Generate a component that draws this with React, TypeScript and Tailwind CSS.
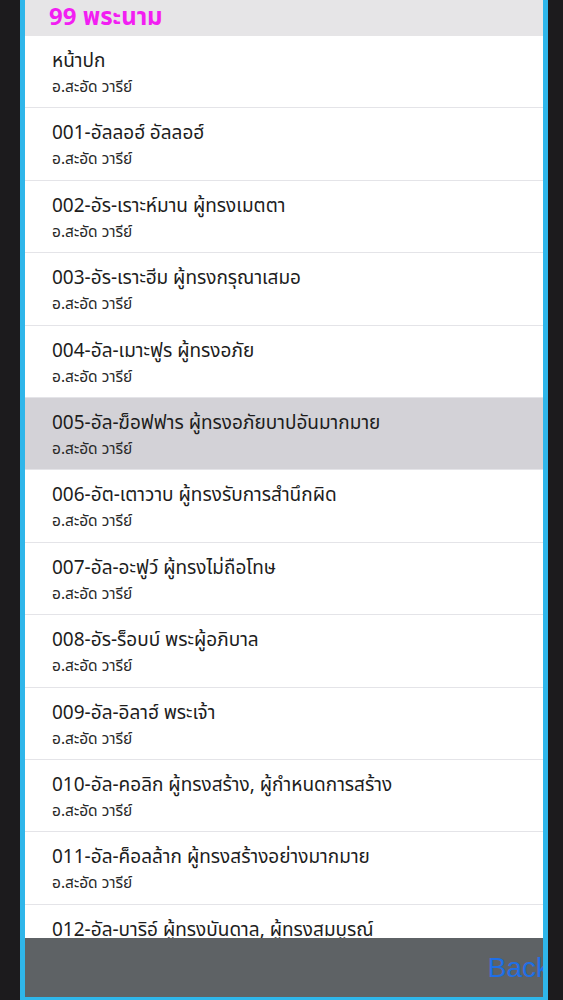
import React from "react";

const items = [
  "หน้าปก",
  "001-อัลลอฮ์ อัลลอฮ์",
  "002-อัร-เราะห์มาน ผู้ทรงเมตตา",
  "003-อัร-เราะฮีม ผู้ทรงกรุณาเสมอ",
  "004-อัล-เมาะฟูร ผู้ทรงอภัย",
  "005-อัล-ฆ็อฟฟาร ผู้ทรงอภัยบาปอันมากมาย",
  "006-อัต-เตาวาบ ผู้ทรงรับการสำนึกผิด",
  "007-อัล-อะฟูว์ ผู้ทรงไม่ถือโทษ",
  "008-อัร-ร็อบบ์ พระผู้อภิบาล",
  "009-อัล-อิลาฮ์ พระเจ้า",
  "010-อัล-คอลิก ผู้ทรงสร้าง, ผู้กำหนดการสร้าง",
  "011-อัล-ค็อลล้าก ผู้ทรงสร้างอย่างมากมาย",
  "012-อัล-บาริอ์ ผู้ทรงบันดาล, ผู้ทรงสมบูรณ์",
];

export default function App() {
  return (
    <div
      className="w-[563px] h-[1000px] bg-[#1c1b1d] flex overflow-hidden"
      style={{ fontFamily: '"Noto Sans", "Noto Sans Thai", "Liberation Sans", sans-serif' }}
    >
      <div className="ml-[20px] w-[528px] h-[1000px] border-x-[5px] border-b-[3px] border-[#2fb6ea] flex flex-col overflow-hidden">
        <div className="h-[36px] shrink-0 bg-[#e6e5e7] pl-[24px] flex items-start">
          <span className="text-[24px] font-bold text-[#f21ef2] leading-[32px]">99 พระนาม</span>
        </div>
        <div className="flex-1 overflow-hidden bg-white">
          {items.map((t, i) => (
            <div
              key={i}
              className={`h-[72.4px] border-b border-[#e4e4e8] ${i === 5 ? "bg-[#d3d2d7]" : "bg-white"}`}
            >
              <div className="pl-[27px] pt-[11px] text-[#1d1d1d]">
                <div className="text-[19px] leading-[26px] whitespace-nowrap">{t}</div>
                <div className="text-[15.5px] leading-[22px] mt-[2px] text-[#2a2a2a]">อ.สะอัด วารีย์</div>
              </div>
            </div>
          ))}
        </div>
        <div className="h-[59px] shrink-0 bg-[#5e6265] flex items-center justify-end overflow-hidden">
          <span
            className="text-[28px] leading-none text-[#1f6fe6] mr-[-7px]"
            style={{ fontFamily: '"Liberation Sans", Arial, sans-serif' }}
          >
            Back
          </span>
        </div>
      </div>
    </div>
  );
}
